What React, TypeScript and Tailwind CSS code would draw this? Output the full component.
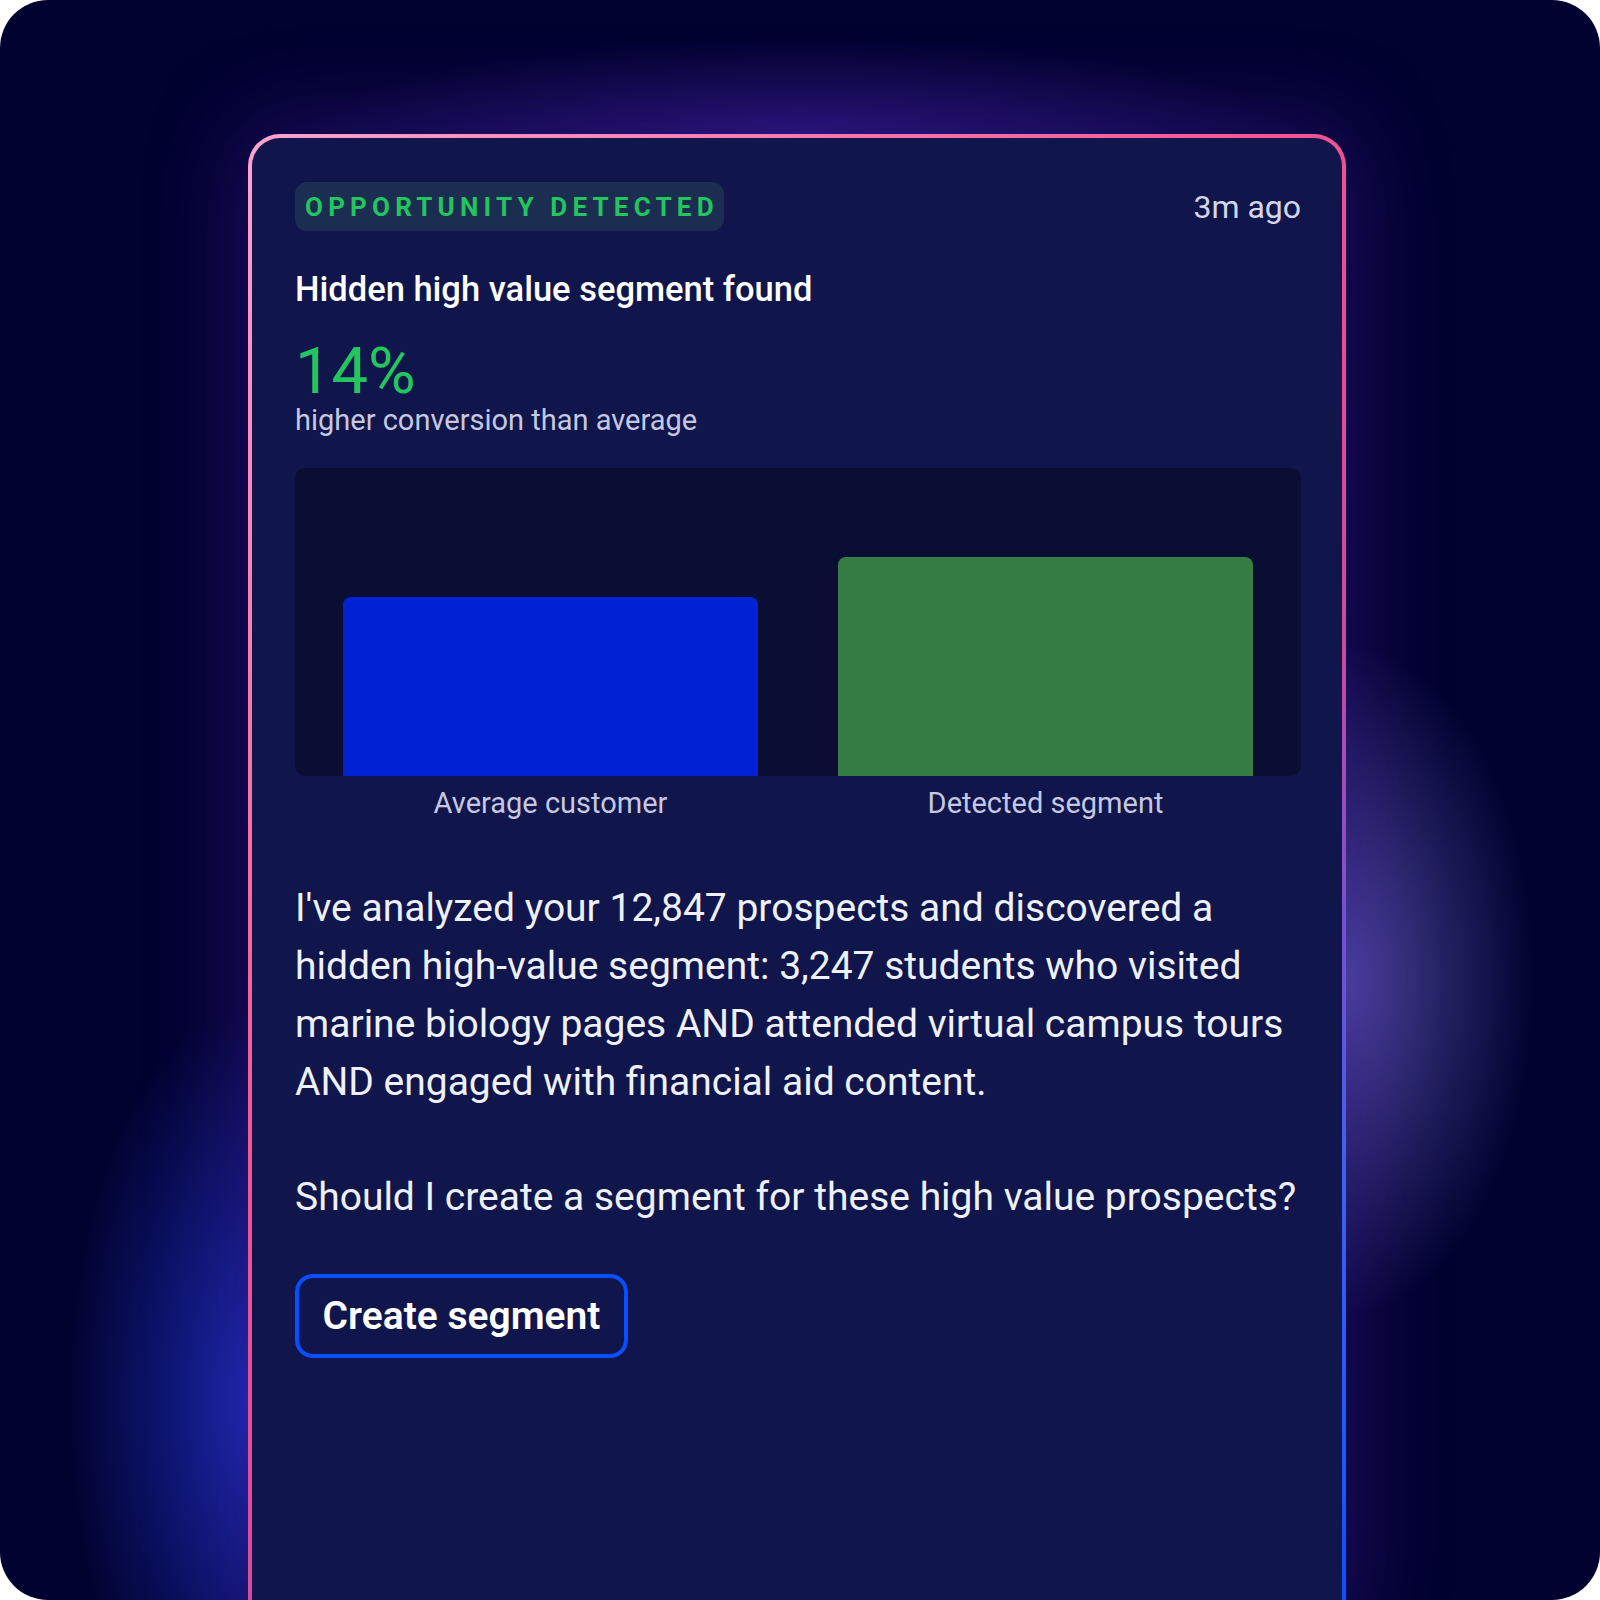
export default function App() {
  return (
    <div className="w-[1600px] h-[1600px] bg-white font-['Roboto',sans-serif]">
      {/* dark stage */}
      <div className="w-full h-full rounded-[48px] overflow-hidden bg-[#020230] bg-[image:radial-gradient(ellipse_260px_560px_at_250px_1400px,rgba(30,55,220,0.7),transparent_70%),radial-gradient(ellipse_270px_480px_at_1345px_980px,rgba(120,110,220,0.62),transparent_70%),radial-gradient(ellipse_700px_140px_at_800px_135px,rgba(75,35,180,0.45),transparent_70%)] pl-[248px] pt-[134px]">
        {/* card with gradient border */}
        <div className="w-[1098px] h-[1500px] rounded-[32px] p-[4px] bg-[linear-gradient(135deg,#fda4cf_0%,#f25592_40%,#e44a98_52%,#c84aa0_62%,#7a4fd0_72%,#4060f0_82%,#0a4fff_100%)] shadow-[0_0_90px_10px_rgba(70,30,170,0.4)]">
          <div className="h-full rounded-[28px] bg-[#10164b] pt-[44px] pl-[43px] pr-[41px]">
            {/* header */}
            <div className="flex items-center justify-between">
              <div className="h-[49px] flex items-center rounded-[12px] bg-[#1b2d50] pl-[10px] pr-[5px]">
                <span className="text-[26px] font-bold tracking-[0.2em] text-[#22c55e] leading-none">
                  OPPORTUNITY DETECTED
                </span>
              </div>
              <span className="text-[32px] text-[#d4d6ea] leading-none">3m ago</span>
            </div>

            <h2 className="mt-[38px] text-[34.5px] leading-[40px] font-medium text-white">
              Hidden high value segment found
            </h2>

            <div className="mt-[30px] text-[65px] leading-[64px] text-[#22c55e]">14%</div>
            <p className="text-[29px] leading-[34px] text-[#c5c8e0]">higher conversion than average</p>

            {/* chart */}
            <div className="mt-[31px] h-[308px] rounded-[10px] bg-[#0a0e33] px-12 flex items-end gap-20">
              <div className="flex-1 h-[179px] rounded-t-[8px] bg-[#0022d4]" />
              <div className="flex-1 h-[219px] rounded-t-[8px] bg-[#357d44]" />
            </div>
            <div className="mt-[10px] px-12 flex gap-20 text-[29px] leading-[34px] text-[#c5c8e0]">
              <div className="flex-1 text-center">Average customer</div>
              <div className="flex-1 text-center">Detected segment</div>
            </div>

            <p className="mt-[59px] text-[39px] leading-[58px] text-[#eef0fa]">
              I've analyzed your 12,847 prospects and discovered a hidden high-value segment: 3,247 students who
              visited marine biology pages AND attended virtual campus tours AND engaged with financial aid content.
            </p>
            <p className="mt-[57px] text-[39px] leading-[58px] text-[#eef0fa]">
              Should I create a segment for these high value prospects?
            </p>

            <button className="mt-[48px] h-[84px] w-[333px] rounded-[18px] border-4 border-[#0a4fff] text-[39px] font-semibold text-white flex items-center justify-center">
              Create segment
            </button>
          </div>
        </div>
      </div>
    </div>
  );
}
